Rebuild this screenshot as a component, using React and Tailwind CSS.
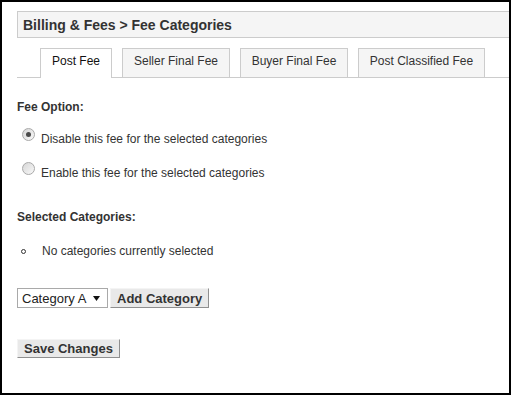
import React from "react";

function Radio({ checked }) {
  return (
    <span className="relative flex h-[13px] w-[13px] shrink-0 items-center justify-center rounded-full border border-[#a9a9a9] bg-gradient-to-br from-[#d6d6d6] to-[#f9f9f9]">
      {checked && <span className="h-[5px] w-[5px] rounded-full bg-[#4a4a4a]" />}
    </span>
  );
}

function Tab({ label, active, w }) {
  if (active) {
    return (
      <div
        className={`${w} -mb-px h-[30px] border border-b-0 border-[#ccc] bg-white pt-[5px] text-center text-[12px] leading-[14px] text-[#111]`}
      >
        {label}
      </div>
    );
  }
  return (
    <div
      className={`${w} h-[29px] border border-b-0 border-[#ccc] bg-[#f5f5f5] pt-[5px] text-center text-[12px] leading-[14px] text-[#333]`}
    >
      {label}
    </div>
  );
}

export default function App() {
  return (
    <div
      className="h-[395px] w-[511px] overflow-hidden border-2 border-black bg-white pl-[15px] text-[#333]"
      style={{ fontFamily: '"Liberation Sans", Arial, sans-serif' }}
    >
      <div className="mt-[9px] flex h-[27px] items-center border border-r-0 border-[#ccc] bg-[#f5f5f5] pl-[5px] text-[14px] font-bold leading-[16px] text-[#333]">
        Billing &amp; Fees &gt; Fee Categories
      </div>

      <div className="mt-[10px] flex items-end gap-[10px] border-b border-[#ccc] pl-[23px]">
        <Tab label="Post Fee" active w="w-[72px]" />
        <Tab label="Seller Final Fee" w="w-[108px]" />
        <Tab label="Buyer Final Fee" w="w-[108px]" />
        <Tab label="Post Classified Fee" w="w-[127px]" />
      </div>

      <div className="mt-[22px] text-[12px] font-bold leading-[14px]">Fee Option:</div>

      <div className="mt-[14px] flex items-start pl-[5px]">
        <Radio checked />
        <span className="ml-[6px] mt-[4px] text-[12px] leading-[14px]">
          Disable this fee for the selected categories
        </span>
      </div>
      <div className="mt-[16px] flex items-start pl-[5px]">
        <Radio />
        <span className="ml-[6px] mt-[4px] text-[12px] leading-[14px]">
          Enable this fee for the selected categories
        </span>
      </div>

      <div className="mt-[30px] text-[12px] font-bold leading-[14px]">Selected Categories:</div>

      <div className="mt-[20px] flex items-center pl-[4px] text-[12px] leading-[14px]">
        <span className="h-[5px] w-[5px] rounded-full border border-[#333]" />
        <span className="ml-[16px]">No categories currently selected</span>
      </div>

      <div className="mt-[30px] flex items-center">
        <div className="flex h-[20px] w-[91px] items-center border border-[#a9a9a9] bg-white pl-[4px] text-[13px] leading-[15px] text-[#222]">
          <span>Category A</span>
          <svg className="ml-[7px]" width="7" height="5" viewBox="0 0 7 5">
            <polygon points="0,0 7,0 3.5,5" fill="#111" />
          </svg>
        </div>
        <button className="ml-[2px] h-[20px] border border-b-[#8f8f8f] border-l-[#f4f4f4] border-r-[#8f8f8f] border-t-[#f4f4f4] bg-[#e9e9e9] px-[6px] text-[13px] font-bold leading-[15px] text-[#333]">
          Add Category
        </button>
      </div>

      <div className="mt-[31px] flex">
        <button className="h-[19px] border border-b-[#8f8f8f] border-l-[#f4f4f4] border-r-[#8f8f8f] border-t-[#f4f4f4] bg-[#e9e9e9] px-[6px] text-[13px] font-bold leading-[15px] text-[#333]">
          Save Changes
        </button>
      </div>
    </div>
  );
}
